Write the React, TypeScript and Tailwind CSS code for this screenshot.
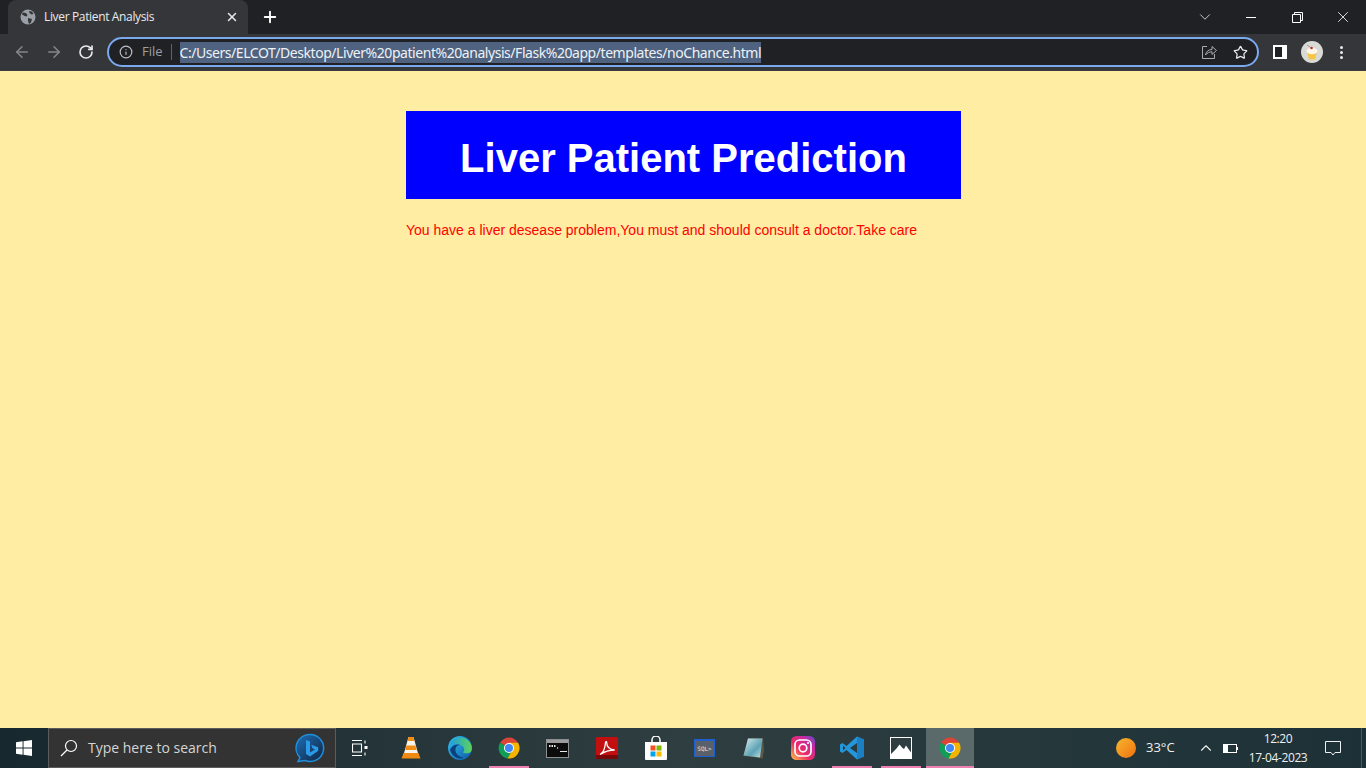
import { ArrowLeft, ArrowRight, ChevronDown, ChevronUp, Info, Plus, RotateCw, Star, X } from "lucide-react";

const uiFont = "font-['Open_Sans','Noto_Sans',sans-serif]";

function Globe() {
  return (
    <svg width="16" height="16" viewBox="0 0 16 16">
      <circle cx="8" cy="8" r="7.5" fill="#9aa0a6" />
      <path d="M3 3.500l3 .5 1.500 2-1 1.500-2-.5-3-2zM9 2l3 .5 1.500 2.500-2 .5-2-1.500zM8 9l4 1-1 3.500-2 1.500-1-3z" fill="#35363a" />
    </svg>
  );
}

function ShareIcon() {
  return (
    <svg width="16" height="16" viewBox="0 0 16 16" fill="none" stroke="#a9adb1" strokeWidth="1">
      <path d="M6 2.500H1.500v12h12V10" />
      <path d="M4.500 11c.5-3.500 3-5.500 6.500-5.500V2.500l4.500 4-4.500 4V7.800C8.500 7.800 6.200 8.800 4.500 11z" />
    </svg>
  );
}

function Avatar() {
  return (
    <svg width="22" height="22" viewBox="0 0 22 22">
      <circle cx="11" cy="11" r="11" fill="#d9d9d6" />
      <path d="M6.500 12h9l-1.500 6.500H8z" fill="#f6c544" />
      <ellipse cx="11" cy="10" rx="5.500" ry="3.200" fill="#fff8ea" />
      <circle cx="10.500" cy="7" r="1.300" fill="#c92a2a" />
      <path d="M6 4l3 2" stroke="#9b9b9b" />
    </svg>
  );
}

function ChromeLogo() {
  return (
    <svg width="24" height="24" viewBox="0 0 48 48">
      <path d="M24 24 L6 13.500A21 21 0 0 1 42.200 13.500z" fill="#db4437" />
      <path d="M6 13.500A21 21 0 0 0 21 44.800L31 27 24 24z" fill="#0f9d58" />
      <path d="M42.200 13.500H24L31 27 21 44.800A21 21 0 0 0 42.200 13.500z" fill="#f4b400" />
      <circle cx="24" cy="24" r="10" fill="#fff" />
      <circle cx="24" cy="24" r="8" fill="#4285f4" />
    </svg>
  );
}

function VlcLogo() {
  return (
    <svg width="20" height="24" viewBox="0 0 20 24">
      <path d="M7.500 1h5l5 18H2.500z" fill="#f7f2ea" />
      <path d="M7.500 1h5l1 4h-7zM5.500 9.500h9l1.200 4.500H4.300z" fill="#f28c13" />
      <path d="M2.500 17h15l2 5.500H.5z" fill="#ef8b12" />
    </svg>
  );
}

function EdgeLogo() {
  return (
    <svg width="24" height="24" viewBox="0 0 24 24">
      <defs>
        <linearGradient id="edgeA" x1="0" y1="0" x2="1" y2="1">
          <stop offset="0" stopColor="#35c1f1" />
          <stop offset="1" stopColor="#0c59a4" />
        </linearGradient>
        <linearGradient id="edgeB" x1="0" y1="0" x2="1" y2="0">
          <stop offset="0" stopColor="#1b9de2" />
          <stop offset="1" stopColor="#5fd35a" />
        </linearGradient>
      </defs>
      <circle cx="12" cy="12" r="12" fill="url(#edgeA)" />
      <path d="M2 8C5 1.500 16-1 21.500 6c2.500 3 3 7 1.500 9.500-1.500 2-6 2.500-8 1 2-2 1.500-5.500-1.500-7C9 7.500 4.500 7.500 2 8z" fill="url(#edgeB)" />
      <path d="M12 9c-3.500 0-5 3-4.500 6 .5 3 3.500 6 8 6.500-4.500 3-12-1-13.500-8 2-4 6.500-6 10-4.500z" fill="#0b3f7e" />
    </svg>
  );
}

function CmdLogo() {
  return (
    <div className="w-[23px] h-[19px] bg-[#0c0c0c] border border-[#8d8f90] flex flex-col">
      <div className="h-[3px] bg-[#9a9c9e]" />
      <svg width="21" height="14" viewBox="0 0 21 14">
        <path d="M2 2h1.500v2H2zM4.500 2H6v2H4.500zM7 2h1.500v2H7zM10 4l1.500 1L10 6M13 8h7v1h-7z" fill="#e8e8e8" />
      </svg>
    </div>
  );
}

function PdfLogo() {
  return (
    <svg width="22" height="22" viewBox="0 0 22 22">
      <rect width="22" height="22" rx="1" fill="#c20f0f" />
      <rect y="18" width="22" height="4" fill="#7a0808" />
      <path d="M4 17.500c3-1.500 5-6 5.500-12 .2-1 1.200-1 1.200 0 0 4 3 7 8 7.500-5 0-10 1.500-14.700 4.500z" fill="none" stroke="#fff" strokeWidth="1.300" />
    </svg>
  );
}

function StoreLogo() {
  return (
    <svg width="24" height="24" viewBox="0 0 24 24">
      <path d="M8 7V4a4 4 0 0 1 8 0v3" fill="none" stroke="#fff" strokeWidth="1.500" />
      <path d="M1 6h22v17a1 1 0 0 1-1 1H2a1 1 0 0 1-1-1z" fill="#fff" />
      <rect x="6.500" y="9.500" width="5" height="5" fill="#f25022" />
      <rect x="12.500" y="9.500" width="5" height="5" fill="#7fba00" />
      <rect x="6.500" y="15.500" width="5" height="5" fill="#00a4ef" />
      <rect x="12.500" y="15.500" width="5" height="5" fill="#ffb900" />
    </svg>
  );
}

function SqlLogo() {
  return (
    <div className="w-[21px] h-[18px] bg-[#5a6069] border border-[#1f5fd0] border-t-2 flex items-center justify-center font-['DejaVu_Sans_Mono',monospace] text-[6px] leading-none text-[#e6e6e6]">
      SQL&gt;
    </div>
  );
}

function NotepadLogo() {
  return (
    <svg width="24" height="24" viewBox="0 0 24 24">
      <defs>
        <linearGradient id="noteA" x1="0" y1="0" x2="1" y2="1">
          <stop offset="0" stopColor="#d8edf1" />
          <stop offset="0.600" stopColor="#5ea3b4" />
          <stop offset="1" stopColor="#c5e0e6" />
        </linearGradient>
      </defs>
      <path d="M6 2h15l1 12-1.500 9-2-1-17-2z" fill="#7a6a50" opacity="0.600" />
      <path d="M6 2.500h14.500L18 21.500 1.500 19.500z" fill="url(#noteA)" />
    </svg>
  );
}

function InstagramLogo() {
  return (
    <svg width="24" height="24" viewBox="0 0 24 24">
      <defs>
        <linearGradient id="igA" x1="0" y1="1" x2="1" y2="0">
          <stop offset="0" stopColor="#fdc94b" />
          <stop offset="0.400" stopColor="#ee2a66" />
          <stop offset="0.750" stopColor="#c32aa3" />
          <stop offset="1" stopColor="#5a4fcf" />
        </linearGradient>
      </defs>
      <rect width="24" height="24" rx="5.500" fill="url(#igA)" />
      <rect x="4" y="4" width="16" height="16" rx="4.500" fill="none" stroke="#fff" strokeWidth="1.700" />
      <circle cx="12" cy="12" r="3.800" fill="none" stroke="#fff" strokeWidth="1.700" />
      <circle cx="17" cy="7" r="1.100" fill="#fff" />
    </svg>
  );
}

function VscodeLogo() {
  return (
    <svg width="24" height="24" viewBox="0 0 24 24">
      <path d="M17 0.500 24 3.500V20.500L17 23.500 6.500 14 2.500 17 0 15.500V8.500L2.500 7 6.500 10z" fill="#2496dc" />
      <path d="M17 0.500 24 3.500V20.500L17 23.500z" fill="#1b7fc4" />
      <path d="M17 7 10 12l7 5z" fill="#2c3c3e" />
      <path d="M3 9.500 5.500 12 3 14.500z" fill="#2c3c3e" />
    </svg>
  );
}

function PhotosLogo() {
  return (
    <svg width="22" height="22" viewBox="0 0 22 22">
      <rect x="0.500" y="0.500" width="21" height="21" fill="#2f3e40" stroke="#fff" />
      <path d="M1 21v-4l5.500-5.500 3-4 3 3.500 1.500 1 2-3.500 5 7v5.500z" fill="#fff" />
    </svg>
  );
}

function TaskViewIcon() {
  return (
    <svg width="16" height="16" viewBox="0 0 16 16" fill="none" stroke="#fff" strokeWidth="1.100">
      <path d="M0 .5h10M0 15.500h10M.5 4h9v8h-9zM13 .5v3M13 12.500v3" />
      <rect x="12.500" y="6" width="3" height="3" fill="#fff" stroke="none" />
    </svg>
  );
}

function BingLogo() {
  return (
    <svg width="30" height="30" viewBox="0 0 30 30">
      <defs>
        <linearGradient id="bingA" x1="0" y1="0" x2="1" y2="1">
          <stop offset="0" stopColor="#1f6fb8" />
          <stop offset="1" stopColor="#10233f" />
        </linearGradient>
      </defs>
      <path d="M15 1.500a13.500 13.500 0 1 1-5 26L3 28.500l2-4A13.500 13.500 0 0 1 15 1.500z" fill="url(#bingA)" stroke="#1f8fdc" strokeWidth="1.500" />
      <path d="M11 7l4 1.500v11l5-3-2.500-1.200-1.300-3.500 7 2.500v3.500L15 23.500 11 21z" fill="#2a9be8" />
    </svg>
  );
}

const apps = [
  { key: "vlc", icon: <VlcLogo /> },
  { key: "edge", icon: <EdgeLogo /> },
  { key: "chrome", icon: <ChromeLogo />, open: true },
  { key: "cmd", icon: <CmdLogo /> },
  { key: "pdf", icon: <PdfLogo /> },
  { key: "store", icon: <StoreLogo /> },
  { key: "sql", icon: <SqlLogo /> },
  { key: "notepad", icon: <NotepadLogo /> },
  { key: "instagram", icon: <InstagramLogo /> },
  { key: "vscode", icon: <VscodeLogo />, open: true },
  { key: "photos", icon: <PhotosLogo />, open: true },
  { key: "chrome2", icon: <ChromeLogo />, open: true, active: true },
];

function Chrome() {
  return (
    <div className={`shrink-0 ${uiFont}`}>
      <div className="h-[34px] bg-[#202124] flex items-end">
        <div className="ml-2 w-[240px] h-[34px] bg-[#35363a] rounded-t-lg flex items-center pl-[12px] pr-[9px]">
          <Globe />
          <span className="ml-2 flex-1 text-xs text-[#e8eaed] tracking-[-0.35px]">Liver Patient Analysis</span>
          <X size={14} strokeWidth={2.5} className="text-[#e8eaed]" />
        </div>
        <div className="w-[44px] h-[34px] flex items-center justify-center">
          <Plus size={18} strokeWidth={2.5} className="text-white" />
        </div>
        <div className="flex-1" />
        <div className="h-[34px] flex items-center text-white">
          <div className="w-[46px] flex justify-center">
            <ChevronDown size={18} strokeWidth={1} />
          </div>
          <div className="w-[46px] flex justify-center">
            <div className="w-[10px] h-px bg-white" />
          </div>
          <div className="w-[46px] flex justify-center">
            <svg width="11" height="11" viewBox="0 0 11 11" fill="none" stroke="#fff">
              <path d="M2.500 2.500V.5h8v8H8.500M.5 2.500h8v8h-8z" />
            </svg>
          </div>
          <div className="w-[46px] flex justify-center">
            <X size={18} strokeWidth={1.1} />
          </div>
        </div>
      </div>
      <div className="h-[37px] bg-[#35363a] border-b border-[#3c3d40] flex items-center">
        <ArrowLeft size={18} strokeWidth={2} className="ml-[13px] text-[#84878b]" />
        <ArrowRight size={18} strokeWidth={2} className="ml-[14px] text-[#84878b]" />
        <RotateCw size={16} strokeWidth={2.5} className="ml-[15px] text-[#e8eaed]" />
        <div className="ml-[13px] w-[1152px] h-[30px] rounded-full border-2 border-[#7ba9ee] bg-[#202124] flex items-center pl-[10px] pr-[9px]">
          <Info size={14} className="text-[#bdc1c6]" />
          <span className="ml-[9px] text-[13px] text-[#9aa0a6]">File</span>
          <div className="ml-2 w-px h-4 bg-[#5f6368]" />
          <span className="ml-2 h-[21px] bg-[#4f6380] text-sm leading-[21px] tracking-[-0.45px] text-[#eef1f5] font-['Noto_Sans',sans-serif] w-[581px] whitespace-nowrap">
            C:/Users/ELCOT/Desktop/Liver%20patient%20analysis/Flask%20app/templates/noChance.html
          </span>
          <div className="flex-1" />
          <ShareIcon />
          <Star size={15} className="ml-[16px] text-[#e8eaed]" />
        </div>
        <div className="ml-[14px] w-[14px] h-3.5 border-2 border-white bg-white flex justify-start">
          <div className="w-[7px] h-full bg-[#202124]" />
        </div>
        <div className="ml-[14px]">
          <Avatar />
        </div>
        <div className="ml-[17px] flex flex-col gap-[2px]">
          <div className="w-[3px] h-[3px] rounded-full bg-[#e8eaed]" />
          <div className="w-[3px] h-[3px] rounded-full bg-[#e8eaed]" />
          <div className="w-[3px] h-[3px] rounded-full bg-[#e8eaed]" />
        </div>
      </div>
    </div>
  );
}

function Taskbar() {
  return (
    <div className={`h-10 shrink-0 flex items-stretch bg-gradient-to-r from-[#17292f] via-[#2f3e40] to-[#1c3137] ${uiFont}`}>
      <div className="w-[48px] flex items-center justify-center">
        <svg width="16" height="16" viewBox="0 0 17 17" fill="#fff">
          <path d="M0 2.400 7 1.400V8H0zM8 1.300 17 0V8H8zM0 9h7v6.600L0 14.600zM8 9h9v8l-9-1.300z" />
        </svg>
      </div>
      <div className="w-[288px] bg-[#333] border border-[#5c5c5c] flex items-center pl-[11px] pr-[10px]">
        <svg width="18" height="18" viewBox="0 0 18 18" fill="none" stroke="#fff" strokeWidth="1.200">
          <circle cx="11" cy="7" r="5.500" />
          <path d="M7 11 1 17" />
        </svg>
        <span className="ml-[10px] flex-1 text-sm text-[#d5d5d5]">Type here to search</span>
        <BingLogo />
      </div>
      <div className="w-[51px] flex items-center justify-center pr-[3px]">
        <TaskViewIcon />
      </div>
      {apps.map((a) => (
        <div key={a.key} className="w-[49px] flex items-center justify-center relative pr-[2px]">
          {a.active && <div className="absolute inset-y-0 left-0 right-px bg-[#5a6a6a]" />}
          <div className="relative">{a.icon}</div>
          {a.open && <div className={`absolute bottom-0 h-0.5 bg-[#ef7fb0] ${a.active ? "left-0 right-px" : "left-1 right-[5px]"}`} />}
        </div>
      ))}
      <div className="flex-1" />
      <div className="flex items-center text-[#f0f0f0]">
        <div className="w-5 h-5 rounded-full bg-gradient-to-br from-[#f5b62e] to-[#f0700e]" />
        <span className="ml-[10px] text-[13px] w-[41px]">33°C</span>
        <ChevronUp size={18} strokeWidth={1.5} className="ml-[10px]" />
        <div className="ml-[8px] w-[14px] h-[9px] border border-white flex items-center">
          <div className="w-[4px] h-full bg-white" />
        </div>
        <div className="w-px h-[3px] bg-white" />
        <div className="w-[80px] flex flex-col items-center text-xs leading-[19px] tracking-[-0.4px]">
          <span>12:20</span>
          <span>17-04-2023</span>
        </div>
        <svg width="16" height="16" viewBox="0 0 16 16" fill="none" stroke="#f0f0f0" className="ml-[7px]">
          <path d="M.5 1.500h15v11H10l-2 2.500-2-2.500H.5z" />
        </svg>
        <div className="ml-[20px] w-px h-full bg-[#4a5a5d]" />
        <div className="w-[4px]" />
      </div>
    </div>
  );
}

export default function App() {
  return (
    <div className="w-full h-screen flex flex-col overflow-hidden">
      <Chrome />
      <main className="flex-1 bg-[#ffeda3] font-['Liberation_Sans',Arial,sans-serif]">
        <div className="w-[555px] ml-[406px] pt-10">
          <h1 className="h-[88px] bg-[#0000ff] pt-6 text-center text-[40px] leading-[46px] font-bold text-white">Liver Patient Prediction</h1>
          <p className="mt-[23px] text-sm leading-4 text-[#ff0000]">You have a liver desease problem,You must and should consult a doctor.Take care</p>
        </div>
      </main>
      <Taskbar />
    </div>
  );
}
